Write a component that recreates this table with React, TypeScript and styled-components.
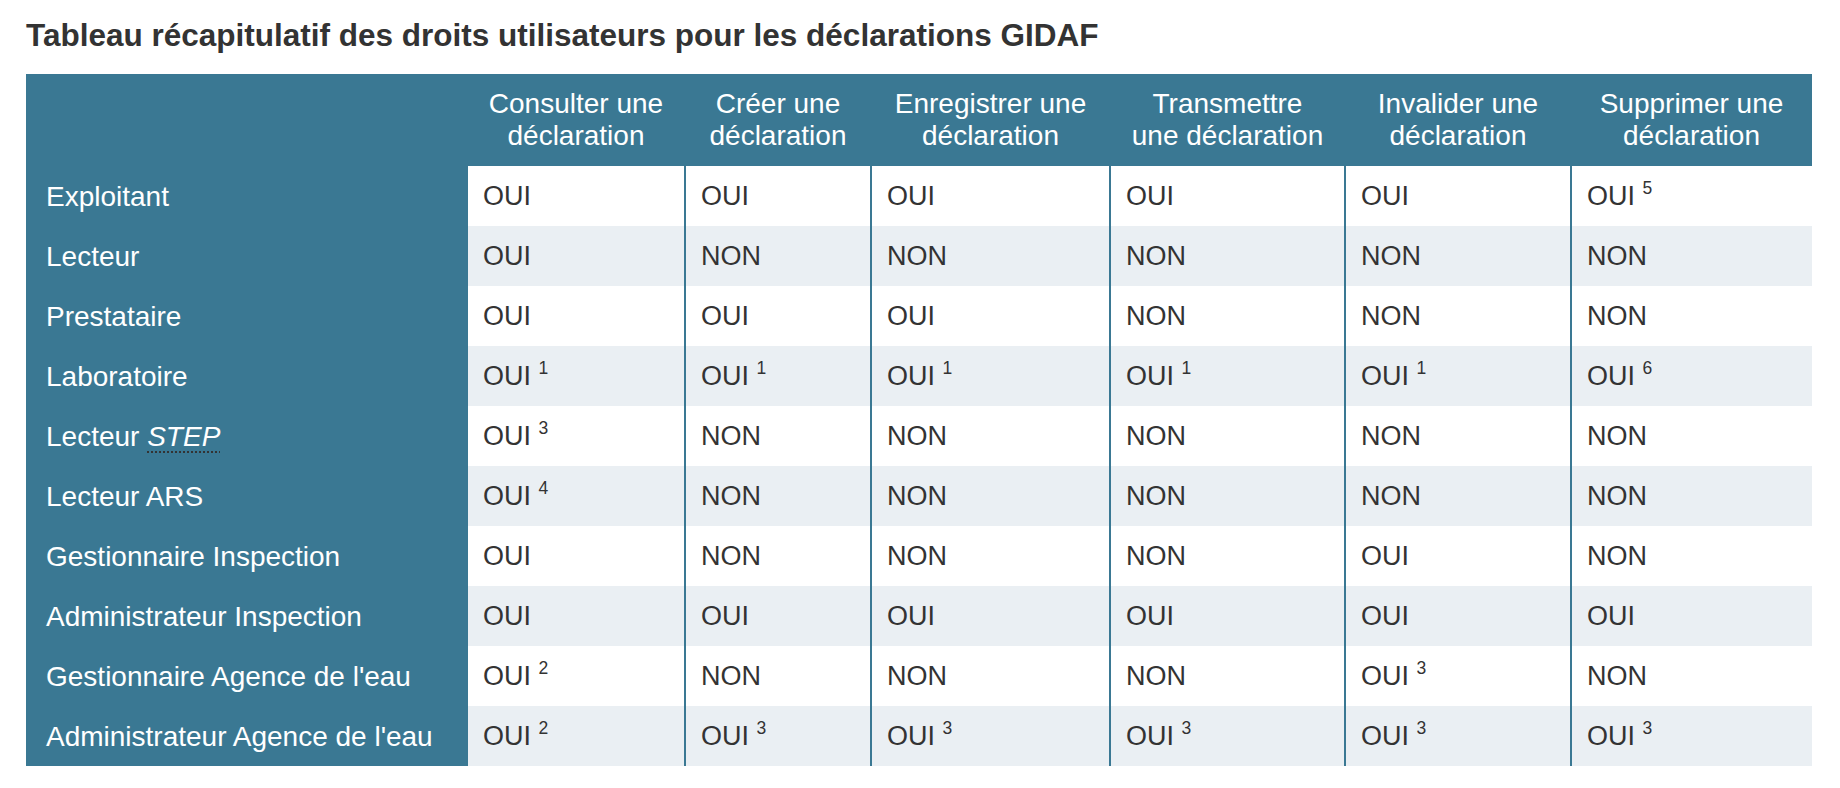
import React from 'react';
import styled, { createGlobalStyle } from 'styled-components';

const blue = '#3a7893';
const stripe = '#eaeff3';
const ink = '#333333';

const GlobalStyle = createGlobalStyle`
  body {
    margin: 0;
    background: #ffffff;
    color: ${ink};
    font-family: "Liberation Sans", Arial, Helvetica, sans-serif;
  }
`;

const Page = styled.main`
  padding: 17px 28px 0 26px;
`;

const Title = styled.h2`
  margin: 0 0 21px;
  font-size: 31.5px;
  line-height: 36px;
  font-weight: 700;
  color: ${ink};
`;

const Table = styled.table`
  width: 1786px;
  table-layout: fixed;
  border-collapse: collapse;
  font-size: 27px;
  line-height: 31px;
`;

const HeadCell = styled.th`
  height: 92px;
  padding: 0 20px;
  background: ${blue};
  color: #ffffff;
  font-size: 28px;
  font-weight: 400;
  line-height: 32px;
  text-align: center;
  vertical-align: middle;
`;

const RowHeader = styled.th`
  height: 60px;
  padding: 0 19px 0 20px;
  background: ${blue};
  color: #ffffff;
  font-size: 28px;
  font-weight: 400;
  text-align: left;
  vertical-align: middle;
  white-space: nowrap;
`;

const Row = styled.tr<{ $striped: boolean }>`
  background: ${({ $striped }) => ($striped ? stripe : '#ffffff')};
`;

const Cell = styled.td`
  height: 60px;
  padding: 0 12px 0 15px;
  border-left: 2px solid ${blue};
  color: ${ink};
  vertical-align: middle;
  white-space: nowrap;
`;

const Note = styled.sup`
  font-size: 17.5px;
  line-height: 0;
  vertical-align: 11px;
`;

const Abbr = styled.abbr`
  font-style: italic;
  text-decoration: underline dotted ${ink};
  text-decoration-thickness: 2px;
  text-underline-offset: 6px;
`;

type Value = [string, number?];

const columns = [
  'Consulter une déclaration',
  'Créer une déclaration',
  'Enregistrer une déclaration',
  'Transmettre une déclaration',
  'Invalider une déclaration',
  'Supprimer une déclaration',
];

const widths = [441, 218, 186, 239, 235, 226, 241];

const O: Value = ['OUI'];
const N: Value = ['NON'];

const rows: { role: React.ReactNode; key: string; values: Value[] }[] = [
  { key: 'exploitant', role: 'Exploitant', values: [O, O, O, O, O, ['OUI', 5]] },
  { key: 'lecteur', role: 'Lecteur', values: [O, N, N, N, N, N] },
  { key: 'prestataire', role: 'Prestataire', values: [O, O, O, N, N, N] },
  {
    key: 'laboratoire',
    role: 'Laboratoire',
    values: [['OUI', 1], ['OUI', 1], ['OUI', 1], ['OUI', 1], ['OUI', 1], ['OUI', 6]],
  },
  {
    key: 'step',
    role: (
      <>
        Lecteur <Abbr title="Station de traitement des eaux usées">STEP</Abbr>
      </>
    ),
    values: [['OUI', 3], N, N, N, N, N],
  },
  { key: 'ars', role: 'Lecteur ARS', values: [['OUI', 4], N, N, N, N, N] },
  { key: 'gest-insp', role: 'Gestionnaire Inspection', values: [O, N, N, N, O, N] },
  { key: 'admin-insp', role: 'Administrateur Inspection', values: [O, O, O, O, O, O] },
  {
    key: 'gest-agence',
    role: "Gestionnaire Agence de l'eau",
    values: [['OUI', 2], N, N, N, ['OUI', 3], N],
  },
  {
    key: 'admin-agence',
    role: "Administrateur Agence de l'eau",
    values: [['OUI', 2], ['OUI', 3], ['OUI', 3], ['OUI', 3], ['OUI', 3], ['OUI', 3]],
  },
];

export default function App() {
  return (
    <>
      <GlobalStyle />
      <Page>
        <Title>Tableau récapitulatif des droits utilisateurs pour les déclarations GIDAF</Title>
        <Table>
          <colgroup>
            {widths.map((w, i) => (
              <col key={i} style={{ width: w }} />
            ))}
          </colgroup>
          <thead>
            <tr>
              <HeadCell />
              {columns.map((c) => (
                <HeadCell key={c} scope="col">
                  {c}
                </HeadCell>
              ))}
            </tr>
          </thead>
          <tbody>
            {rows.map((row, r) => (
              <Row key={row.key} $striped={r % 2 === 1}>
                <RowHeader scope="row">{row.role}</RowHeader>
                {row.values.map(([label, note], c) => (
                  <Cell key={c}>
                    {label}
                    {note !== undefined && (
                      <>
                        {' '}
                        <Note>{note}</Note>
                      </>
                    )}
                  </Cell>
                ))}
              </Row>
            ))}
          </tbody>
        </Table>
      </Page>
    </>
  );
}
